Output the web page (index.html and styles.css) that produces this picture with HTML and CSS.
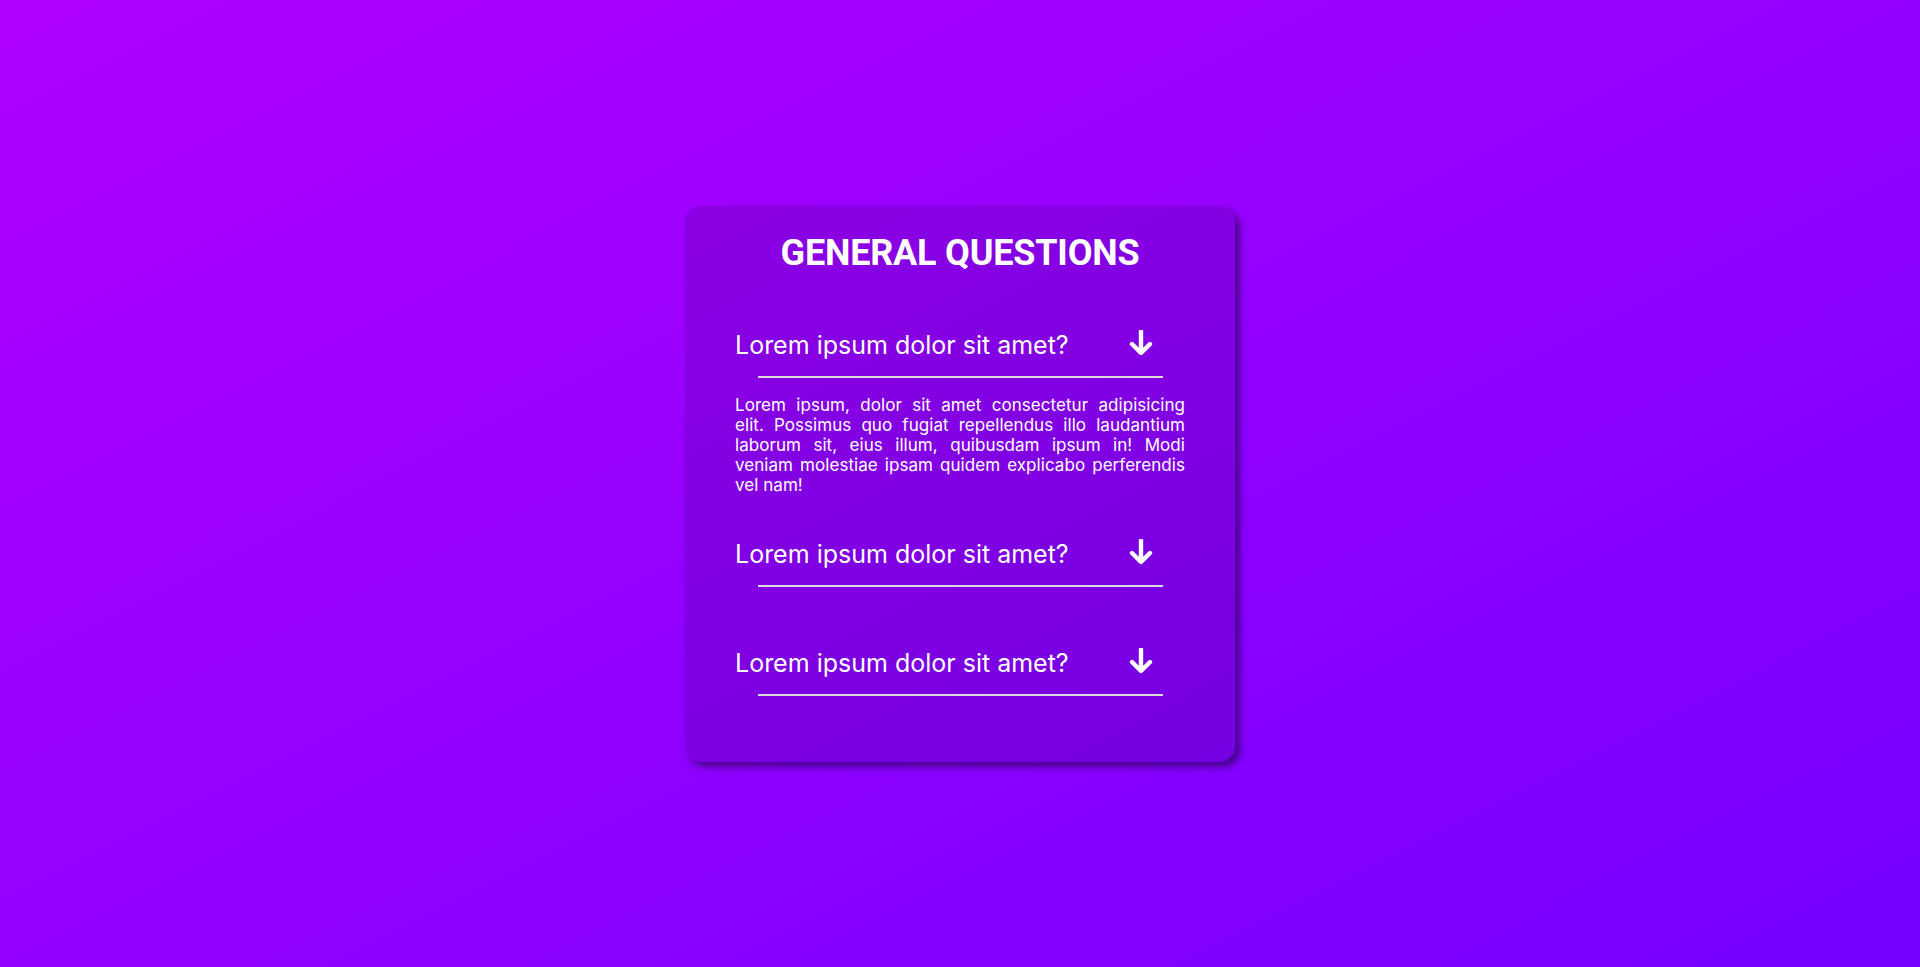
FILE: index.html
```html
<!DOCTYPE html>
<html lang="en">
<head>
<meta charset="utf-8">
<title>General Questions</title>
<link rel="stylesheet" href="styles.css">
</head>
<body>
<main class="page">
  <section class="card">
    <h1 class="title">GENERAL QUESTIONS</h1>
    <div class="faq">
      <div class="item open">
        <div class="question">
          <span class="q-text">Lorem ipsum dolor sit amet?</span>
          <svg class="arrow" viewBox="0 0 26 26" width="26" height="26"><path d="M13 1.5 V22 M4 14 L13 23 L22 14" fill="none" stroke="#fff" stroke-width="4.4" stroke-linecap="round" stroke-linejoin="round"/></svg>
        </div>
        <div class="rule"></div>
        <p class="answer">Lorem ipsum, dolor sit amet consectetur adipisicing elit.&nbsp;Possimus quo fugiat repellendus illo laudantium laborum sit, eius illum, quibusdam ipsum in! Modi veniam molestiae ipsam quidem explicabo perferendis vel nam!</p>
      </div>
      <div class="item">
        <div class="question">
          <span class="q-text">Lorem ipsum dolor sit amet?</span>
          <svg class="arrow" viewBox="0 0 26 26" width="26" height="26"><path d="M13 1.5 V22 M4 14 L13 23 L22 14" fill="none" stroke="#fff" stroke-width="4.4" stroke-linecap="round" stroke-linejoin="round"/></svg>
        </div>
        <div class="rule"></div>
        <p class="answer collapsed"></p>
      </div>
      <div class="item">
        <div class="question">
          <span class="q-text">Lorem ipsum dolor sit amet?</span>
          <svg class="arrow" viewBox="0 0 26 26" width="26" height="26"><path d="M13 1.5 V22 M4 14 L13 23 L22 14" fill="none" stroke="#fff" stroke-width="4.4" stroke-linecap="round" stroke-linejoin="round"/></svg>
        </div>
        <div class="rule"></div>
        <p class="answer collapsed"></p>
      </div>
    </div>
  </section>
</main>
</body>
</html>
```
FILE: styles.css
```css
* { box-sizing: border-box; }
html, body { margin: 0; padding: 0; }
body {
  font-family: "Inter", "Roboto", "Liberation Sans", sans-serif;
  color: #fff;
  background: linear-gradient(to bottom right, #b000ff, #7500ff);
  min-height: 100vh;
}
.page {
  min-height: 100vh;
  display: flex;
  align-items: center;
  justify-content: center;
}
.card {
  width: 550px;
  padding: 25px 50px 5px;
  border-radius: 16px;
  background: rgba(20, 0, 60, 0.14);
  box-shadow: 5px 5px 7px rgba(30, 0, 70, 0.6);
}
.title {
  margin: 0 0 55px;
  font-family: "Roboto", "Inter", sans-serif;
  font-size: 36px;
  line-height: 44px;
  font-weight: 700;
  letter-spacing: -0.2px;
  text-align: center;
}
.item { margin-bottom: 44px; }
.question {
  display: flex;
  justify-content: space-between;
  align-items: flex-start;
  height: 30px;
  padding-right: 31px;
}
.q-text {
  font-size: 25px;
  line-height: 30px;
  font-weight: 400;
}
.arrow { display: block; }
.rule {
  width: 90%;
  margin: 16px auto 0;
  height: 2px;
  background: #dcdcdc;
}
.answer {
  margin: 17px 0 0;
  font-size: 17px;
  line-height: 20px;
  letter-spacing: 0.05px;
  text-align: justify;
}
.answer.collapsed { height: 0; overflow: hidden; }
```
